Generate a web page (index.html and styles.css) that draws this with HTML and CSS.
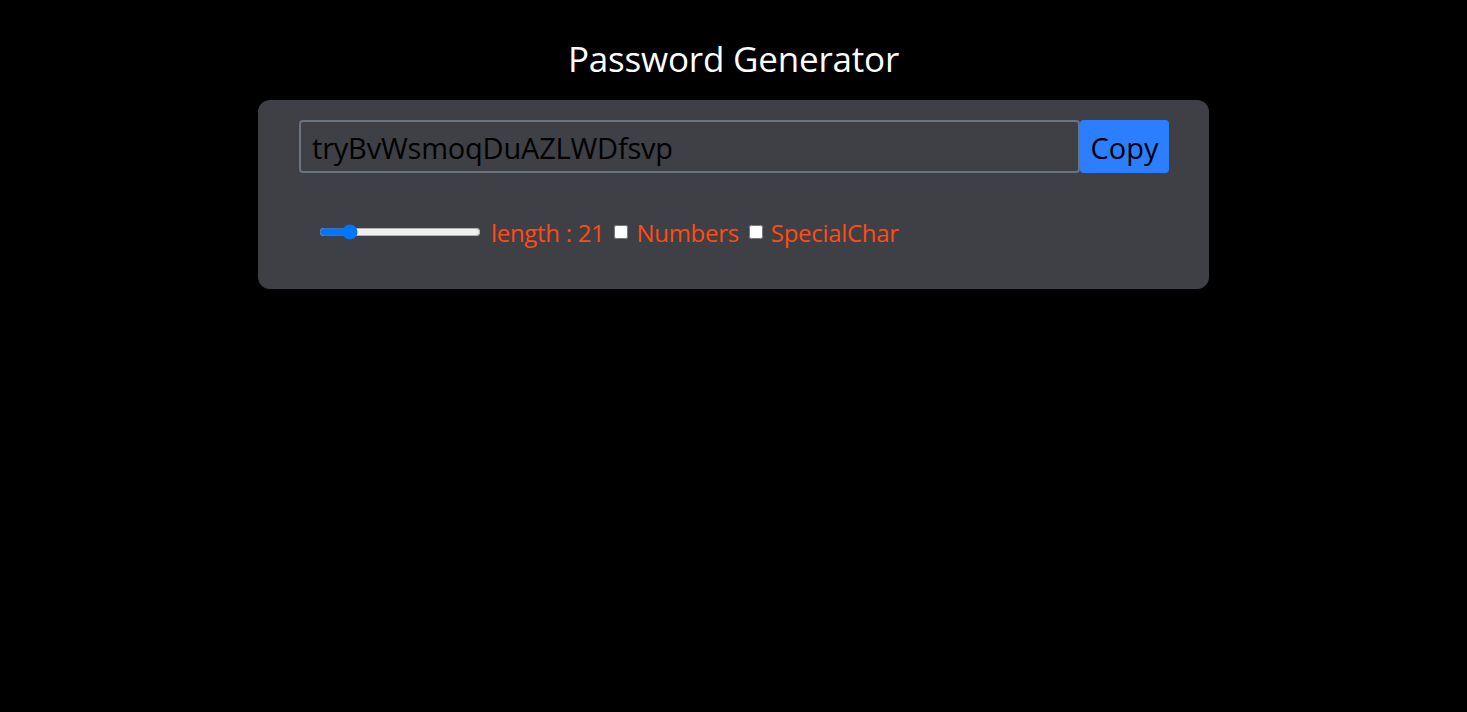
FILE: index.html
```html
<!DOCTYPE html>
<html>
<head>
<meta charset="utf-8">
<link rel="stylesheet" href="styles.css">
</head>
<body>
<h1 class="title">Password Generator</h1>
<div class="card">
  <div class="field">
    <input class="pw" type="text" value="tryBvWsmoqDuAZLWDfsvp" readonly>
    <button class="copy">Copy</button>
  </div>
  <div class="opts">
    <input class="range" type="range" min="6" max="100" value="21">
    <label class="lbl">length : 21</label>
    <input class="chk" type="checkbox" id="num">
    <label class="lbl" for="num">Numbers</label>
    <input class="chk" type="checkbox" id="sp">
    <label class="lbl" for="sp">SpecialChar</label>
  </div>
</div>
</body>
</html>
```
FILE: styles.css
```css
html, body {
  margin: 0;
  padding: 0;
  background: #000;
  font-family: "Open Sans", "Noto Sans", sans-serif;
}
.title {
  margin: 0;
  padding: 37px 0 19px 0;
  text-align: center;
  color: #fff;
  font-size: 35px;
  font-weight: 400;
  line-height: 44px;
  letter-spacing: -0.2px;
}
.card {
  width: 951px;
  margin: 0 auto;
  background: #3f3f46;
  border-radius: 12px;
  padding: 20px 40px 0 41px;
  box-sizing: border-box;
  height: 189px;
}
.field {
  display: flex;
}
.pw {
  flex: 1;
  height: 53px;
  box-sizing: border-box;
  background: #3f3f46;
  border: 2px solid #6b7280;
  border-radius: 4px;
  color: #000;
  font-family: inherit;
  font-size: 29px;
  padding: 2px 11px 0 11px;
  outline: none;
  letter-spacing: -0.2px;
}
.copy {
  width: 89px;
  height: 53px;
  border: none;
  border-radius: 4px;
  background: #2b7fff;
  color: #000;
  font-family: inherit;
  font-size: 29px;
  padding: 2px 0 0 0;
}
.opts {
  display: flex;
  align-items: center;
  padding-left: 20px;
  margin-top: 45px;
  height: 28px;
}
.range {
  width: 162px;
  margin: 0 10px 0 0;
}
.lbl {
  color: #ff4b14;
  font-size: 24px;
  letter-spacing: -0.3px;
}
.chk {
  width: 14px;
  height: 14px;
  margin: 0 8px 0 10px;
}
```
